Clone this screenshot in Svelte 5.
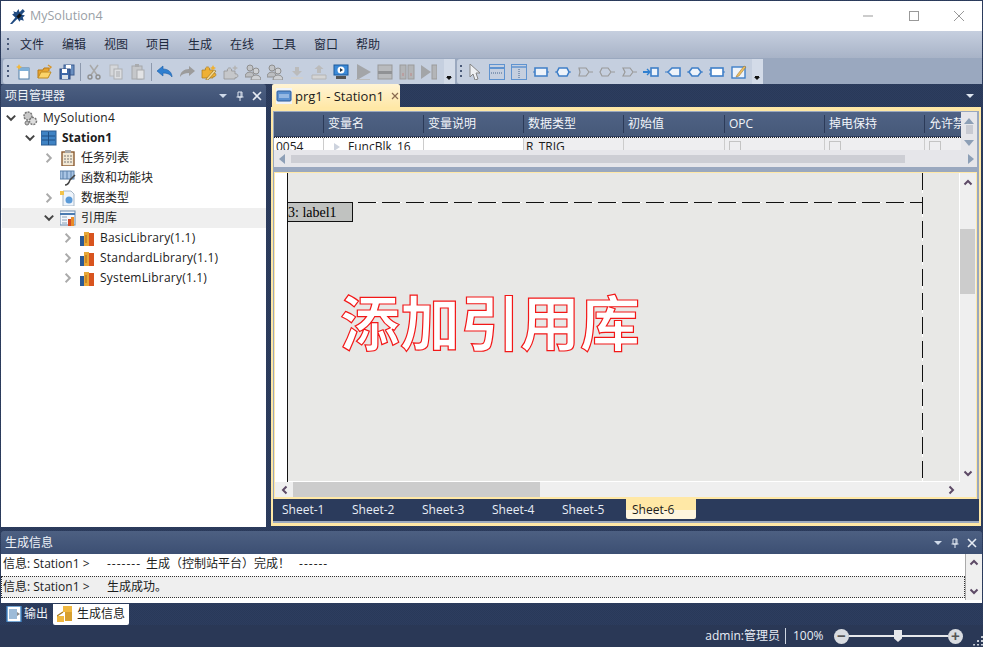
<script>
	const menus = ['文件', '编辑', '视图', '项目', '生成', '在线', '工具', '窗口', '帮助'];
	const columns = ['', '变量名', '变量说明', '数据类型', '初始值', 'OPC', '掉电保持', '允许禁用'];
	const sheets = ['Sheet-1', 'Sheet-2', 'Sheet-3', 'Sheet-4', 'Sheet-5', 'Sheet-6'];

	const G = '#a9a9a9';
	const B = '#3f7fc8';
	const PUZZLE = 'M1 7h3.5a2.2 2.2 0 1 1 4 0H12v3a2 2 0 1 1 0 3.6V15H1z';

	const stub = (shape) => `<path d="${shape}" fill="#eef3fa" stroke="${B}" stroke-width="1.6"/><path d="M0 8h2M14 8h2" stroke="${B}"/>`;
	const stubG = (shape) => `<path d="${shape}" fill="none" stroke="#9a9a9a" stroke-width="1.2"/><path d="M12.5 8H16" stroke="#9a9a9a"/>`;

	const icons = {
		new: `<rect x="4" y="4" width="10" height="11" fill="#fff" stroke="#4f7fa8"/><rect x="4" y="4" width="10" height="3" fill="#7fb0d8"/><path d="M4 0l1 2 2 1-2 1-1 2-1-2-2-1 2-1z" fill="#f3b73a"/>`,
		open: `<path d="M1 14V6h5l1-2h5v3" fill="#e8a530" stroke="#b87a18"/><path d="M1 14l3-6h10l-3 6z" fill="#fbd46a" stroke="#c08a20"/><path d="M11 1l3 2-2 2" fill="none" stroke="#d8962a" stroke-width="1.4"/>`,
		save: `<rect x="5" y="1" width="10" height="10" fill="#6a8fc0" stroke="#3c5c90"/><rect x="7" y="1" width="5" height="4" fill="#fff"/><rect x="1" y="5" width="10" height="10" fill="#3f68a8" stroke="#2c4a80"/><rect x="3" y="5" width="5" height="4" fill="#fff"/><rect x="3" y="11" width="6" height="4" fill="#d8e0ea"/>`,
		cut: `<path d="M4 1l7 10M12 1L5 11" stroke="${G}" stroke-width="1.5"/><circle cx="4" cy="13" r="2" fill="none" stroke="#8f8f8f" stroke-width="1.4"/><circle cx="12" cy="13" r="2" fill="none" stroke="#8f8f8f" stroke-width="1.4"/>`,
		copy: `<rect x="2" y="1" width="8" height="11" fill="#d5d7da" stroke="#b5b7ba"/><rect x="6" y="5" width="8" height="10" fill="#dcdee1" stroke="#adafb2"/><path d="M8 8h4M8 10h4M8 12h4" stroke="#a9abae"/>`,
		paste: `<rect x="2" y="2" width="10" height="13" fill="#c5c7ca" stroke="#a5a7aa"/><rect x="5" y="0" width="4" height="3" fill="#a9abae"/><rect x="7" y="6" width="7" height="9" fill="#e2e3e5" stroke="#a9abae"/>`,
		undo: `<path d="M0 7l6-5v3c5 0 9 3 9 8-2-3-5-4-9-4v3z" fill="#2f7fd0" stroke="#1c5ea8" stroke-width=".6"/>`,
		redo: `<path d="M16 7l-6-5v3C5 5 1 8 1 13c2-3 5-4 9-4v3z" fill="#9c9c9c"/>`,
		build: `<path d="${PUZZLE}" transform="translate(0 -1)" fill="#eeb034" stroke="#a87a1c" stroke-width=".7"/><path d="M5 15l8-9 2 1-8 9H5z" fill="#f6d890" stroke="#8a6a20" stroke-width=".6"/><path d="M12 1l1 2 2 1-2 1-1 2-1-2-2-1 2-1z" fill="#eeb034"/>`,
		puzzle: `<path d="${PUZZLE}" fill="#c5c7ca" stroke="#969696" stroke-width=".8"/><path d="M12 1l1 2 2 1-2 1-1 2-1-2-2-1 2-1z" fill="#b5b5b5"/>`,
		people: `<circle cx="5" cy="4" r="3" fill="#c2c4c7" stroke="#8f8f8f"/><circle cx="11" cy="7" r="3" fill="#cfd1d4" stroke="#8f8f8f"/><path d="M0 13c0-3 2-5 5-5s4 2 4 5z" fill="#bcbec1" stroke="#8f8f8f"/><path d="M6 16c0-3 2-5 5-5s5 2 5 5z" fill="#cfd1d4" stroke="#8f8f8f"/>`,
		down: `<path d="M6 3h4v4h3l-5 5-5-5h3z" fill="#bbb"/><rect x="2" y="13" width="12" height="2" fill="#cfcfcf"/>`,
		up: `<path d="M6 9h4V5h2.5L8 1 3.5 5H6z" fill="#bbb"/><path d="M1 11h14v4H1z" fill="#d5d5d5" stroke="#b5b5b5"/>`,
		monitor: `<rect x="1" y="1" width="14" height="10" fill="#3c8ad8" stroke="#1c5a9c"/><circle cx="8" cy="6" r="3.5" fill="#fff"/><path d="M7 4l3 2-3 2z" fill="#234"/><rect x="3" y="12" width="10" height="3" fill="#555"/>`,
		play: `<path d="M2 0l14 8-14 8z" fill="#a3a5a8"/><rect x="1" y="15" width="14" height="1" fill="#bbb"/>`,
		stop: `<rect x="1" y="1" width="14" height="14" fill="#b9bbbe" stroke="#999"/><rect x="1" y="7" width="14" height="3" fill="#909295"/>`,
		pause: `<rect x="1" y="1" width="6" height="14" fill="#b3b5b8" stroke="#9b9b9b"/><rect x="9" y="1" width="6" height="14" fill="#b3b5b8" stroke="#9b9b9b"/><path d="M4 9v3M12 9v3" stroke="#c08888"/>`,
		step: `<path d="M0 1l10 7-10 7z" fill="#a3a5a8"/><rect x="11" y="1" width="5" height="14" fill="#b3b5b8" stroke="#9b9b9b"/>`,
		cursor: `<path d="M3 0v13l3-3 2 6 3-1-2-6h4z" fill="#eef0f3" stroke="#858585"/>`,
		hline: `<rect x=".5" y=".5" width="15" height="15" fill="none" stroke="#5f93d0"/><path d="M0 4h16" stroke="#5f93d0" stroke-width="2"/><path d="M2 9h12" stroke="#44648c" stroke-dasharray="1 1"/>`,
		vline: `<rect x=".5" y=".5" width="15" height="15" fill="none" stroke="#5f93d0"/><path d="M0 3h16" stroke="#5f93d0" stroke-width="1.5"/><path d="M8 5v10" stroke="#44648c" stroke-dasharray="1 1"/>`,
		block: stub('M2 4h12v8H2z'),
		hexa: stub('M4 4h8l2 4-2 4H4L2 8z'),
		andG: stubG('M2 4h7l3 4-3 4H2l1-4z'),
		orG: stubG('M3 4h6l3 4-3 4H3l-2-4z'),
		xorG: stubG('M2 4h7l3 4-3 4H2l2-4z'),
		pin: `<path d="M0 8h6" stroke="#2f7fd0" stroke-width="2"/><path d="M4 5l3 3-3 3" fill="none" stroke="#2f7fd0" stroke-width="1.4"/><rect x="8" y="4" width="7" height="8" fill="#eef3fa" stroke="${B}" stroke-width="1.6"/>`,
		tagL: `<path d="M0 8h3" stroke="${B}"/><path d="M3 8l4-4h8v8H7z" fill="#eef3fa" stroke="${B}" stroke-width="1.6"/>`,
		oval: `<path d="M0 8h2M14 8h2" stroke="${B}"/><path d="M5 4h6l3 4-3 4H5L2 8z" fill="#eef3fa" stroke="${B}" stroke-width="1.6"/>`,
		box: `<path d="M0 6h2M0 10h2M14 8h2" stroke="${B}"/><rect x="2" y="4" width="12" height="8" fill="#fff" stroke="${B}" stroke-width="1.6"/>`,
		note: `<rect x="1" y="3" width="13" height="11" fill="#eef3fa" stroke="${B}" stroke-width="1.4"/><path d="M6 11l7-9 2 1-7 9-3 1z" fill="#eebf60" stroke="#8a6a30" stroke-width=".5"/>`,
		gears: `<circle cx="6" cy="6" r="4" fill="#c8c8c8" stroke="#777" stroke-width="1.5" stroke-dasharray="2 1"/><circle cx="11" cy="11" r="3.5" fill="#ddd" stroke="#777" stroke-width="1.5" stroke-dasharray="2 1"/><circle cx="5" cy="13" r="2" fill="#bbb" stroke="#777"/>`,
		station: `<rect x="0" y="1" width="15" height="14" fill="#3f83c4" stroke="#2a5a90"/><path d="M1 6h13M1 10h13M7.5 2v13" stroke="#1f4f85"/>`,
		tasks: `<rect x="2" y="2" width="12" height="14" fill="#f2e8d4" stroke="#8a5a30" stroke-width="1.4"/><rect x="5" y="0" width="6" height="3" fill="#a8a8a8"/><path d="M4 6h8M4 9h8M4 12h8" stroke="#777" stroke-dasharray="2 1"/>`,
		funcs: `<rect x="0" y="1" width="14" height="8" fill="#a8c4e4" stroke="#5a80aa"/><path d="M3 1v8M7 1v8M11 1v8" stroke="#5a80aa"/><path d="M5 15c3 0 4-2 5-5l5-5" fill="none" stroke="#444" stroke-width="1.5"/>`,
		types: `<path d="M3 1h8l3 3v12H3z" fill="#eef4fb" stroke="#a8b8c8"/><circle cx="9" cy="10" r="3.5" fill="#5a9ad8"/><rect x="0" y="1" width="4" height="4" fill="#f2c24a"/>`,
		refs: `<rect x="0" y="1" width="15" height="14" fill="#f2f6fb" stroke="#6a8cb0"/><path d="M0 4h15" stroke="#4a7ab0" stroke-width="2"/><path d="M2 7h5M2 10h5M2 13h5" stroke="#8aa0b8"/><rect x="8" y="9" width="3" height="7" fill="#d04a28"/><rect x="11" y="7" width="3" height="9" fill="#e88a28"/>`,
		books: `<rect x="1" y="6" width="4" height="10" fill="#2c5a94"/><rect x="5" y="2" width="5" height="14" fill="#e8a838"/><rect x="10" y="3" width="5" height="13" fill="#d8541f"/><path d="M7 5v8" stroke="#a86a14"/>`,
		prg: `<rect x="0" y="0" width="16" height="16" fill="#eef3fa"/><rect x="1" y="3" width="14" height="10" rx="1" fill="#5a90d0" stroke="#2c5a94"/><path d="M3 7h10M3 9h10" stroke="#cfe0f5"/>`,
		output: `<rect x="1" y="0" width="14" height="16" fill="#fff" stroke="#3f83c4" stroke-width="1.4"/><rect x="3" y="3" width="8" height="10" fill="#9dbbd8"/><path d="M11 6l3 2-3 2z" fill="#8a8a8a"/>`,
		info: `<rect x="0" y="10" width="7" height="6" fill="#f0b840"/><rect x="6" y="0" width="9" height="6" fill="#f0b840"/><rect x="8" y="6" width="7" height="9" fill="#d8a030"/><path d="M0 10l6-4" stroke="#a87a1c" stroke-width="1.4"/>`
	};

	const tools1 = [
		['new', 'open', 'save'],
		['cut', 'copy', 'paste'],
		['undo', 'redo', 'build', 'puzzle', 'people', 'people', 'down', 'up', 'monitor', 'play', 'stop', 'pause', 'step']
	];
	const tools2 = ['cursor', 'hline', 'vline', 'block', 'hexa', 'andG', 'orG', 'xorG', 'pin', 'tagL', 'oval', 'box', 'note'];

	const tree = [
		{ level: 0, open: true, icon: 'gears', label: 'MySolution4' },
		{ level: 1, open: true, icon: 'station', label: 'Station1', bold: true },
		{ level: 2, arrow: true, icon: 'tasks', label: '任务列表' },
		{ level: 2, icon: 'funcs', label: '函数和功能块' },
		{ level: 2, arrow: true, icon: 'types', label: '数据类型' },
		{ level: 2, open: true, icon: 'refs', label: '引用库', selected: true },
		{ level: 3, arrow: true, icon: 'books', label: 'BasicLibrary(1.1)' },
		{ level: 3, arrow: true, icon: 'books', label: 'StandardLibrary(1.1)' },
		{ level: 3, arrow: true, icon: 'books', label: 'SystemLibrary(1.1)' }
	];
</script>

{#snippet ico(name)}
	<svg class="ico" viewBox="0 0 16 16">{@html icons[name]}</svg>
{/snippet}

{#snippet chev(dir)}
	<svg class="chev {dir}" viewBox="0 0 10 10"><path d="M1.5 6.5L5 3l3.5 3.5" fill="none" stroke="#5d4a66" stroke-width="2" /></svg>
{/snippet}

{#snippet paneTools()}
	<div class="pane-tools">
		<svg viewBox="0 0 10 10"><path d="M1 3h8L5 7z" fill="#cfdaea" /></svg>
		<svg viewBox="0 0 10 10"><path d="M3 1h4v5H3zM1.5 6h7M5 6v4M6 1v5" fill="none" stroke="#dfe6f0" /></svg>
		<svg viewBox="0 0 10 10"><path d="M1 1l8 8M9 1l-8 8" stroke="#e6ebf3" stroke-width="1.6" /></svg>
	</div>
{/snippet}

<div class="app">
	<header class="title">
		<svg class="logo" viewBox="0 0 16 16">
			<path d="M0 15l5-6-3-3 2-1-1-2 3 1 2-3 1 3 3-3 2 2-3 3 3 1-2 2 1 3-3-1-1 2-2-3-5 5z" fill="#1f4a80" />
			<path d="M6 8l3-3 2 2-3 3z" fill="#111" />
		</svg>
		<span class="title-text">MySolution4</span>
		<div class="win">
			<svg viewBox="0 0 12 12"><path d="M1 6h10" stroke="#999" /></svg>
			<svg viewBox="0 0 12 12"><rect x="1.5" y="1.5" width="9" height="9" fill="none" stroke="#999" /></svg>
			<svg viewBox="0 0 12 12"><path d="M1 1l10 10M11 1L1 11" stroke="#999" /></svg>
		</div>
	</header>

	<nav class="menu">
		<span class="grip"></span>
		{#each menus as m}<span class="menu-item">{m}</span>{/each}
	</nav>

	<div class="toolrow">
		<div class="toolbar tb1">
			<span class="grip"></span>
			{#each tools1 as group, i}
				{#if i}<span class="tsep"></span>{/if}
				{#each group as t}<span class="tool">{@render ico(t)}</span>{/each}
			{/each}
			<span class="overflow"></span>
		</div>
		<div class="toolbar tb2">
			<span class="grip"></span>
			{#each tools2 as t}<span class="tool">{@render ico(t)}</span>{/each}
			<span class="overflow"></span>
		</div>
	</div>

	<main class="main">
		<aside class="explorer">
			<div class="pane-head">
				<span>项目管理器</span>
				{@render paneTools()}
			</div>
			<ul class="tree">
				{#each tree as n}
					<li class="node l{n.level}" class:selected={n.selected} class:bold={n.bold}>
						<span class="arrow">
							{#if n.open}
								<svg viewBox="0 0 10 10"><path d="M1.5 3L5 6.5 8.5 3" fill="none" stroke="#444" stroke-width="1.6" /></svg>
							{:else if n.arrow}
								<svg viewBox="0 0 10 10"><path d="M3 1.5L6.5 5 3 8.5" fill="none" stroke="#aaa" stroke-width="1.6" /></svg>
							{/if}
						</span>
						{@render ico(n.icon)}
						<span class="label">{n.label}</span>
					</li>
				{/each}
			</ul>
		</aside>

		<section class="doc">
			<div class="tabstrip">
				<div class="doc-tab">
					{@render ico('prg')}
					<span>prg1 - Station1</span>
					<svg class="tab-x" viewBox="0 0 10 10"><path d="M2 2l6 6M8 2l-6 6" stroke="#8a6a50" stroke-width="1.2" /></svg>
				</div>
				<svg class="tab-menu" viewBox="0 0 10 10"><path d="M1 3h8L5 7z" fill="#dfe6f0" /></svg>
			</div>

			<div class="well">
				<div class="vars">
					<div class="vars-main">
						<div class="vars-cols">
							<div class="grid head">
								{#each columns as c}<span>{c}</span>{/each}
							</div>
							<div class="grid row">
								<span class="w">0054</span>
								<span class="w"><i class="tri"></i>FuncBlk_16</span>
								<span class="w"></span>
								<span>R_TRIG</span>
								<span></span>
								<span><i class="check"></i></span>
								<span><i class="check"></i></span>
								<span><i class="check"></i></span>
							</div>
						</div>
						<div class="vscroll-mini">
							<i class="tri-up"></i><b></b><i class="tri-dn"></i>
						</div>
					</div>
					<div class="hscroll-mini">
						<i class="tri-lf"></i><b></b><i class="tri-rt"></i>
					</div>
				</div>

				<div class="editor">
					<div class="editor-top">
						<div class="canvas">
							<span class="rail"></span>
							<div class="paper">
								<span class="dash-h"></span>
								<span class="dash-v"></span>
								<span class="signal">3: label1</span>
								<span class="stamp">添加引用库</span>
							</div>
						</div>
						<div class="vscroll">
							{@render chev('up')}
							<b></b>
							{@render chev('down')}
						</div>
					</div>
					<div class="hscroll">
						{@render chev('left')}
						<b></b>
						{@render chev('right')}
					</div>
				</div>

				<div class="sheets">
					{#each sheets as s, i}
						<span class="sheet" class:active={i === 5}>{s}</span>
					{/each}
				</div>
			</div>
		</section>
	</main>

	<section class="build">
		<div class="pane-head wide">
			<span>生成信息</span>
			{@render paneTools()}
		</div>
		<div class="log">
			<div class="log-lines">
				<div class="line"><span class="src">信息: Station1 &gt;</span><span class="dashes">-------</span><span>生成（控制站平台）完成！</span><span class="dashes tail">------</span></div>
				<div class="line current"><span class="src">信息: Station1 &gt;</span><span>生成成功。</span></div>
			</div>
			<div class="log-scroll">
				{@render chev('up')}
				{@render chev('down')}
			</div>
		</div>
		<div class="bottom-tabs">
			<span class="btab">{@render ico('output')}输出</span>
			<span class="btab active">{@render ico('info')}生成信息</span>
		</div>
	</section>

	<footer class="status">
		<span class="user">admin:管理员</span>
		<span class="zoom">100%</span>
		<span class="round">−</span>
		<span class="slider"><i></i></span>
		<span class="round">+</span>
		<span class="resize"></span>
	</footer>
</div>

<style>
	:global(body) {
		margin: 0;
		background: #2a3856;
	}

	.app {
		width: 983px;
		height: 647px;
		box-sizing: border-box;
		padding: 1px 1px 0;
		display: flex;
		flex-direction: column;
		overflow: hidden;
		background: repeating-conic-gradient(#2d3d5f 0 25%, #293959 0 50%) 0 0 / 2px 2px;
		font: 12px/16px "Open Sans", "Noto Sans CJK SC", sans-serif;
		color: #1c1c1c;
	}

	.ico {
		width: 16px;
		height: 16px;
		flex: none;
	}

	/* title bar */
	.title {
		height: 30px;
		display: flex;
		align-items: center;
		background: #fff;
		flex: none;
	}

	.logo {
		width: 17px;
		height: 17px;
		margin-left: 9px;
	}

	.title-text {
		margin-left: 3px;
		font-size: 12.5px;
		color: #9a9fa6;
	}

	.win {
		margin-left: auto;
		margin-right: 17px;
		display: flex;
		gap: 33.5px;
	}

	.win svg {
		width: 12px;
		height: 12px;
	}

	/* menu */
	.menu {
		height: 27px;
		flex: none;
		display: flex;
		align-items: center;
		background: linear-gradient(#c6cfdf, #a8b3c7);
	}

	.grip {
		width: 2px;
		height: 14px;
		margin-left: 6px;
		background: repeating-linear-gradient(#4a5a78 0 2px, transparent 2px 5px);
	}

	.menu .grip {
		margin-right: 11px;
	}

	.menu-item {
		width: 42px;
		color: #1e2a3e;
	}

	/* toolbars */
	.toolrow {
		height: 26px;
		flex: none;
		display: flex;
		background: #9aa8bf;
	}

	.toolbar {
		height: 25px;
		margin-top: 1px;
		display: flex;
		align-items: center;
		background: #c5cfdf;
		border-radius: 3px 0 0 3px;
		overflow: hidden;
	}

	.tb1 {
		width: 452px;
		margin-left: 2px;
	}

	.tb2 {
		width: 306px;
		margin-left: 2px;
	}

	.tb1 .grip {
		margin-right: 3px;
		margin-left: 4px;
	}

	.tb2 .grip {
		margin-right: 2px;
		margin-left: 3px;
	}

	.tool {
		width: 22px;
		height: 22px;
		flex: none;
		display: flex;
		align-items: center;
		justify-content: center;
	}

	.tsep {
		width: 1px;
		height: 18px;
		margin: 0 2px;
		background: #8d99ad;
	}

	.overflow {
		margin-left: auto;
		width: 11px;
		height: 25px;
		position: relative;
		background: #d3dbe8;
	}

	.overflow::after {
		content: '';
		position: absolute;
		left: 2px;
		top: 18px;
		border: 3.5px solid transparent;
		border-top-color: #111;
		border-bottom: 0;
		box-shadow: 0 -2px 0 -1px #111;
	}

	/* main split */
	.main {
		height: 443px;
		flex: none;
		display: flex;
	}

	.explorer {
		width: 265px;
		flex: none;
		display: flex;
		flex-direction: column;
	}

	.pane-head {
		height: 23px;
		flex: none;
		display: flex;
		align-items: center;
		justify-content: space-between;
		box-sizing: border-box;
		padding: 1px 4px 0;
		color: #eef2f8;
		background: linear-gradient(#4d6082, #3c4f73);
		border-radius: 3px 3px 0 0;
	}

	.pane-tools {
		display: flex;
		gap: 7px;
	}

	.pane-tools svg {
		width: 10px;
		height: 10px;
	}

	.tree {
		flex: 1;
		margin: 0;
		padding: 1px 0 0;
		list-style: none;
		background: #fff;
		border-left: 1px solid #fff;
	}

	.node {
		height: 20px;
		display: flex;
		align-items: center;
	}

	.node.l0 {
		padding-left: 3px;
	}

	.node.l1 {
		padding-left: 22px;
	}

	.node.l2 {
		padding-left: 41px;
	}

	.node.l3 {
		padding-left: 60px;
	}

	.node.selected {
		background: #efefef;
	}

	.node.bold {
		font-weight: 700;
	}

	.arrow {
		width: 12px;
		height: 12px;
		margin-right: 5px;
		flex: none;
	}

	.arrow svg {
		width: 12px;
		height: 12px;
		display: block;
	}

	.label {
		margin-left: 5px;
		white-space: nowrap;
	}

	.l0 .label,
	.l3 .label {
		letter-spacing: .2px;
	}

	/* document */
	.doc {
		width: 710px;
		margin-left: 5px;
		flex: none;
		display: flex;
		flex-direction: column;
		padding-bottom: 1px;
	}

	.tabstrip {
		height: 23px;
		flex: none;
		display: flex;
		align-items: center;
		justify-content: space-between;
	}

	.doc-tab {
		width: 128px;
		height: 23px;
		margin-left: 1px;
		box-sizing: border-box;
		padding: 1px 0 0 4px;
		display: flex;
		align-items: center;
		gap: 3px;
		font-size: 13px;
		white-space: nowrap;
		background: linear-gradient(#fff4d4, #ffe8a8);
		border-radius: 2px 2px 0 0;
	}

	.tab-x {
		width: 10px;
		height: 10px;
		margin-left: 3px;
	}

	.tab-menu {
		width: 10px;
		height: 10px;
		margin-right: 6px;
	}

	.well {
		flex: 1;
		min-height: 0;
		display: flex;
		flex-direction: column;
		border: 2px solid #ffe8a6;
		border-top-width: 4px;
		border-bottom-width: 3px;
		background: linear-gradient(#2b3b5c, #2b3b5c) no-repeat 0 calc(100% - 2px) / 100% 22px, #9aa8bf;
		padding: 1px 2px 2px 0;
	}

	.vars {
		height: 55px;
		flex: none;
		display: flex;
		flex-direction: column;
		background: #e6e6ea;
		margin-left: 1px;
	}

	.vars-main {
		height: 38px;
		display: flex;
	}

	.vars-cols {
		flex: 1;
		min-width: 0;
		overflow: hidden;
	}

	.grid {
		display: grid;
		grid-template-columns: 50px 100px 100px 100px 101px 100px 100px 100px;
		width: 751px;
	}

	.head {
		height: 25px;
		align-items: center;
		color: #f2f5fa;
		background: linear-gradient(#4f6285, #465979);
		border-bottom: 1px solid #2d3d5f;
		box-sizing: border-box;
	}

	.head span {
		height: 18px;
		line-height: 18px;
		padding-left: 4px;
		border-right: 1px solid #2b3a58;
		white-space: nowrap;
		overflow: hidden;
		box-sizing: border-box;
	}

	.row {
		height: 13px;
		overflow: hidden;
		background: #eeeef0;
		border-top: 1px dotted #222;
		box-sizing: border-box;
	}

	.row span {
		height: 20px;
		padding: 1px 0 0 2px;
		box-sizing: border-box;
		border-right: 1px solid #ccc;
		line-height: 16px;
		white-space: nowrap;
	}

	.row .w {
		background: #fff;
	}

	.tri {
		display: inline-block;
		border-left: 6px solid #cdd3de;
		border-top: 4px solid transparent;
		border-bottom: 4px solid transparent;
		margin: 0 8px;
	}

	.check {
		display: block;
		width: 10px;
		height: 10px;
		margin: 2px 0 0 2px;
		border: 1px solid #c4c4c4;
	}

	.vscroll-mini {
		width: 16px;
		flex: none;
		display: flex;
		flex-direction: column;
		align-items: center;
		padding-top: 6px;
	}

	.vscroll-mini b {
		width: 7px;
		height: 9px;
		margin: 1px 0 6px;
		background: #c8cad2;
	}

	.tri-up {
		border: 5px solid transparent;
		border-top: 0;
		border-bottom: 6px solid #8d9fb6;
	}

	.tri-dn {
		border: 5px solid transparent;
		border-bottom: 0;
		border-top: 6px solid #8d9fb6;
	}

	.hscroll-mini {
		height: 17px;
		display: flex;
		align-items: center;
		padding: 0 3px 0 5px;
		background: #e6e6ea;
	}

	.hscroll-mini b {
		width: 614px;
		height: 8px;
		margin: 0 auto 0 6px;
		background: #cdced4;
	}

	.tri-lf {
		border: 5px solid transparent;
		border-left: 0;
		border-right: 6px solid #8d9fb6;
	}

	.tri-rt {
		border: 5px solid transparent;
		border-right: 0;
		border-left: 6px solid #8d9fb6;
	}

	.editor {
		height: 327px;
		flex: none;
		margin: 5px 0 0 1px;
		box-sizing: border-box;
		display: flex;
		flex-direction: column;
		border: 1px solid #ffe8a6;
		border-bottom-width: 2px;
		background: #efefef;
	}

	.editor-top {
		height: 309px;
		flex: none;
		display: flex;
	}

	.canvas {
		flex: 1;
		min-width: 0;
		display: flex;
		background: #fff;
	}

	.rail {
		width: 12px;
		flex: none;
		border-right: 1px solid #111;
	}

	.paper {
		flex: 1;
		margin-right: 1px;
		margin-bottom: 1px;
		position: relative;
		background: #e8e8e6;
		overflow: hidden;
	}

	.dash-h {
		position: absolute;
		left: 70px;
		top: 29px;
		width: 564px;
		height: 1px;
		background: repeating-linear-gradient(90deg, #111 0 18px, #fff 18px 20px, transparent 20px 24px);
	}

	.dash-v {
		position: absolute;
		left: 634px;
		top: 0;
		width: 1px;
		height: 308px;
		background: repeating-linear-gradient(#111 0 17px, #fff 17px 20px, transparent 20px 24px);
	}

	.signal {
		position: absolute;
		left: -1px;
		top: 29px;
		width: 66px;
		height: 20px;
		box-sizing: border-box;
		border: 1px solid #111;
		background: #c0c2c0;
		font: 14px/19px "Liberation Serif", serif;
		color: #000;
		white-space: nowrap;
	}

	.stamp {
		position: absolute;
		left: 52px;
		top: 102px;
		font: 700 60px/90px "Noto Sans CJK SC", sans-serif;
		color: #fff;
		-webkit-text-stroke: 1.2px #f21818;
		white-space: nowrap;
	}

	.vscroll {
		width: 16px;
		flex: none;
		display: flex;
		flex-direction: column;
		align-items: center;
		justify-content: space-between;
		position: relative;
		padding: 5px 0 4px;
		box-sizing: border-box;
	}

	.vscroll b {
		position: absolute;
		left: 0;
		top: 56px;
		width: 15px;
		height: 65px;
		background: #ccc;
	}

	.hscroll {
		height: 15px;
		flex: none;
		display: flex;
		align-items: center;
		padding: 0 20px 0 5px;
	}

	.hscroll b {
		width: 247px;
		height: 15px;
		margin: 0 auto 0 3px;
		background: #ccc;
	}

	.chev {
		width: 10px;
		height: 10px;
		flex: none;
	}

	.chev.down {
		transform: rotate(180deg);
	}

	.chev.left {
		transform: rotate(-90deg);
	}

	.chev.right {
		transform: rotate(90deg);
	}

	.sheets {
		height: 22px;
		flex: none;
		display: flex;
		margin-left: 3px;
	}

	.sheet {
		width: 70px;
		height: 20px;
		box-sizing: border-box;
		padding-left: 6px;
		line-height: 21px;
		color: #e8edf5;
	}

	.sheet.active {
		color: #1c1c1c;
		background: linear-gradient(#ffe8a6 0 55%, #fff6de 55%);
		border-radius: 0 0 2px 2px;
	}

	/* build output */
	.build {
		flex: none;
		display: flex;
		flex-direction: column;
		margin-top: 4px;
	}

	.pane-head.wide {
		padding-right: 5px;
	}

	.log {
		height: 49px;
		display: flex;
		background: #fff;
	}

	.log-lines {
		flex: 1;
		min-width: 0;
	}

	.line {
		height: 21px;
		box-sizing: border-box;
		padding: 0 0 1px 2px;
		display: flex;
		align-items: center;
		white-space: nowrap;
	}

	.line.current {
		margin-top: 1px;
		height: 22px;
		background: #efefef;
		border: 1px dotted #333;
		padding: 0 0 1px 1px;
	}

	.src {
		width: 104px;
		flex: none;
	}

	.dashes {
		letter-spacing: 1px;
		margin-right: 5px;
	}

	.tail {
		margin: 0 0 0 9px;
	}

	.log-scroll {
		width: 17px;
		height: 46px;
		flex: none;
		display: flex;
		flex-direction: column;
		align-items: center;
		justify-content: space-between;
		padding: 4px 0;
		box-sizing: border-box;
		background: #efefef;
		border-left: 1px solid #aaa;
	}

	.bottom-tabs {
		height: 22px;
		display: flex;
		align-items: center;
		padding-left: 5px;
		gap: 5px;
	}

	.btab {
		display: flex;
		align-items: center;
		gap: 2px;
		height: 21px;
		color: #eef2f8;
	}

	.btab.active {
		width: 76px;
		padding-left: 4px;
		box-sizing: border-box;
		color: #1c1c1c;
		background: #fff;
		border-radius: 0 0 2px 2px;
		gap: 4px;
	}

	/* status */
	.status {
		flex: 1;
		margin: 0 -1px;
		display: flex;
		align-items: center;
		background: #2a3856;
		color: #e8edf5;
	}

	.user {
		margin-left: auto;
		padding-right: 5px;
		line-height: 16px;
		border-right: 1px solid #cfd6e2;
		margin-right: 7px;
	}

	.zoom {
		width: 41px;
	}

	.round {
		width: 15px;
		height: 15px;
		flex: none;
		border-radius: 50%;
		background: #d9dce1;
		color: #555;
		font: 700 15px/14px "Liberation Sans", sans-serif;
		text-align: center;
	}

	.slider {
		width: 99px;
		height: 2px;
		background: #e6e8ec;
		position: relative;
	}

	.slider i {
		position: absolute;
		left: 45px;
		top: -5px;
		width: 8px;
		height: 12px;
		background: #e6e8ec;
		clip-path: polygon(0 0, 100% 0, 100% 70%, 50% 100%, 0 70%);
	}

	.resize {
		width: 11px;
		height: 11px;
		margin: 8px 0 0 9px;
		background: radial-gradient(circle, #c8ced8 1px, transparent 1.2px) 0 0 / 4px 4px;
		clip-path: polygon(100% 0, 100% 100%, 0 100%);
	}
</style>
